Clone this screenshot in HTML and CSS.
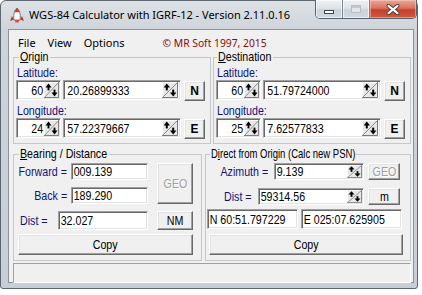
FILE: index.html
```html
<!DOCTYPE html>
<html>
<head>
<meta charset="utf-8">
<title>WGS-84 Calculator</title>
<link rel="stylesheet" href="styles.css">
</head>
<body>
<div class="window">
  <div class="titlebar">
    <svg class="appicon" viewBox="0 0 16 16" width="16" height="16">
      <path d="M3 9 L1 14 L5 12.5Z M13 9 L15 14 L11 12.5Z" fill="#c8352b"/>
      <path d="M8 1 C10.2 3 11.2 5.5 11.2 8.5 L11.2 13 L4.8 13 L4.8 8.5 C4.8 5.5 5.8 3 8 1Z" fill="#fff" stroke="#6a6a6a" stroke-width="0.9"/>
      <path d="M8 1.3 C9.4 2.6 10.2 3.8 10.6 5.2 L5.4 5.2 C5.8 3.8 6.6 2.6 8 1.3Z" fill="#d9352a"/>
      <rect x="6.2" y="13" width="3.6" height="2.4" fill="#e0463a"/>
    </svg>
    <span class="title">WGS-84 Calculator with IGRF-12 - Version 2.11.0.16</span>
    <div class="caption">
      <div class="cbtn cmin"><span class="gmin"></span></div>
      <div class="cbtn cmax"><span class="gmax"></span></div>
      <div class="cbtn cclose">
        <svg viewBox="0 0 14 11" width="14" height="11">
          <path d="M2.5 1.8 L11.5 9.2 M11.5 1.8 L2.5 9.2" stroke="#4a2a24" stroke-width="3.8" stroke-linecap="round"/>
          <path d="M2.5 1.8 L11.5 9.2 M11.5 1.8 L2.5 9.2" stroke="#fff" stroke-width="2.2" stroke-linecap="round"/>
        </svg>
      </div>
    </div>
  </div>

  <div class="client">
    <div class="menubar">
      <span class="menu">File</span>
      <span class="menu">View</span>
      <span class="menu">Options</span>
      <span class="copyright">© MR Soft 1997, 2015</span>
    </div>

    <div class="toprow">
      <fieldset class="group coord">
        <legend class="lg-origin"><span class="n"><u>O</u>rigin</span></legend>
        <div class="lbl"><span class="n">Latitude:</span></div>
        <div class="crow">
          <div class="box deg"><span class="val">60</span><svg class="spin" viewBox="0 0 16 16" preserveAspectRatio="none"><rect width="16" height="16" fill="#e8e8e8"/><path d="M0.5 16V0.5H16" fill="none" stroke="#fff"/><path d="M15.5 0V15.5H0" fill="none" stroke="#7a7a7a"/><path d="M1 15 L15 1" stroke="#8a8a8a"/><path d="M1.6 5.4 L4.8 1.4 L8 5.4Z" fill="#000"/><rect x="3.8" y="5" width="2" height="3.4" fill="#000"/><path d="M8 10.6 L11.2 14.6 L14.4 10.6Z" fill="#000"/><rect x="10.2" y="7.6" width="2" height="3.4" fill="#000"/></svg></div>
          <div class="box mins"><span class="val">20.26899333</span><svg class="spin" viewBox="0 0 16 16" preserveAspectRatio="none"><rect width="16" height="16" fill="#e8e8e8"/><path d="M0.5 16V0.5H16" fill="none" stroke="#fff"/><path d="M15.5 0V15.5H0" fill="none" stroke="#7a7a7a"/><path d="M1 15 L15 1" stroke="#8a8a8a"/><path d="M1.6 5.4 L4.8 1.4 L8 5.4Z" fill="#000"/><rect x="3.8" y="5" width="2" height="3.4" fill="#000"/><path d="M8 10.6 L11.2 14.6 L14.4 10.6Z" fill="#000"/><rect x="10.2" y="7.6" width="2" height="3.4" fill="#000"/></svg></div>
          <div class="btn hemi">N</div>
        </div>
        <div class="lbl lbl2"><span class="n">Longitude:</span></div>
        <div class="crow">
          <div class="box deg"><span class="val">24</span><svg class="spin" viewBox="0 0 16 16" preserveAspectRatio="none"><rect width="16" height="16" fill="#e8e8e8"/><path d="M0.5 16V0.5H16" fill="none" stroke="#fff"/><path d="M15.5 0V15.5H0" fill="none" stroke="#7a7a7a"/><path d="M1 15 L15 1" stroke="#8a8a8a"/><path d="M1.6 5.4 L4.8 1.4 L8 5.4Z" fill="#000"/><rect x="3.8" y="5" width="2" height="3.4" fill="#000"/><path d="M8 10.6 L11.2 14.6 L14.4 10.6Z" fill="#000"/><rect x="10.2" y="7.6" width="2" height="3.4" fill="#000"/></svg></div>
          <div class="box mins"><span class="val">57.22379667</span><svg class="spin" viewBox="0 0 16 16" preserveAspectRatio="none"><rect width="16" height="16" fill="#e8e8e8"/><path d="M0.5 16V0.5H16" fill="none" stroke="#fff"/><path d="M15.5 0V15.5H0" fill="none" stroke="#7a7a7a"/><path d="M1 15 L15 1" stroke="#8a8a8a"/><path d="M1.6 5.4 L4.8 1.4 L8 5.4Z" fill="#000"/><rect x="3.8" y="5" width="2" height="3.4" fill="#000"/><path d="M8 10.6 L11.2 14.6 L14.4 10.6Z" fill="#000"/><rect x="10.2" y="7.6" width="2" height="3.4" fill="#000"/></svg></div>
          <div class="btn hemi">E</div>
        </div>
      </fieldset>

      <fieldset class="group coord dest">
        <legend class="lg-dest"><span class="n"><u>D</u>estination</span></legend>
        <div class="lbl"><span class="n">Latitude:</span></div>
        <div class="crow">
          <div class="box deg"><span class="val">60</span><svg class="spin" viewBox="0 0 16 16" preserveAspectRatio="none"><rect width="16" height="16" fill="#e8e8e8"/><path d="M0.5 16V0.5H16" fill="none" stroke="#fff"/><path d="M15.5 0V15.5H0" fill="none" stroke="#7a7a7a"/><path d="M1 15 L15 1" stroke="#8a8a8a"/><path d="M1.6 5.4 L4.8 1.4 L8 5.4Z" fill="#000"/><rect x="3.8" y="5" width="2" height="3.4" fill="#000"/><path d="M8 10.6 L11.2 14.6 L14.4 10.6Z" fill="#000"/><rect x="10.2" y="7.6" width="2" height="3.4" fill="#000"/></svg></div>
          <div class="box mins"><span class="val">51.79724000</span><svg class="spin" viewBox="0 0 16 16" preserveAspectRatio="none"><rect width="16" height="16" fill="#e8e8e8"/><path d="M0.5 16V0.5H16" fill="none" stroke="#fff"/><path d="M15.5 0V15.5H0" fill="none" stroke="#7a7a7a"/><path d="M1 15 L15 1" stroke="#8a8a8a"/><path d="M1.6 5.4 L4.8 1.4 L8 5.4Z" fill="#000"/><rect x="3.8" y="5" width="2" height="3.4" fill="#000"/><path d="M8 10.6 L11.2 14.6 L14.4 10.6Z" fill="#000"/><rect x="10.2" y="7.6" width="2" height="3.4" fill="#000"/></svg></div>
          <div class="btn hemi">N</div>
        </div>
        <div class="lbl lbl2"><span class="n">Longitude:</span></div>
        <div class="crow">
          <div class="box deg"><span class="val">25</span><svg class="spin" viewBox="0 0 16 16" preserveAspectRatio="none"><rect width="16" height="16" fill="#e8e8e8"/><path d="M0.5 16V0.5H16" fill="none" stroke="#fff"/><path d="M15.5 0V15.5H0" fill="none" stroke="#7a7a7a"/><path d="M1 15 L15 1" stroke="#8a8a8a"/><path d="M1.6 5.4 L4.8 1.4 L8 5.4Z" fill="#000"/><rect x="3.8" y="5" width="2" height="3.4" fill="#000"/><path d="M8 10.6 L11.2 14.6 L14.4 10.6Z" fill="#000"/><rect x="10.2" y="7.6" width="2" height="3.4" fill="#000"/></svg></div>
          <div class="box mins"><span class="val">7.62577833</span><svg class="spin" viewBox="0 0 16 16" preserveAspectRatio="none"><rect width="16" height="16" fill="#e8e8e8"/><path d="M0.5 16V0.5H16" fill="none" stroke="#fff"/><path d="M15.5 0V15.5H0" fill="none" stroke="#7a7a7a"/><path d="M1 15 L15 1" stroke="#8a8a8a"/><path d="M1.6 5.4 L4.8 1.4 L8 5.4Z" fill="#000"/><rect x="3.8" y="5" width="2" height="3.4" fill="#000"/><path d="M8 10.6 L11.2 14.6 L14.4 10.6Z" fill="#000"/><rect x="10.2" y="7.6" width="2" height="3.4" fill="#000"/></svg></div>
          <div class="btn hemi">E</div>
        </div>
      </fieldset>
    </div>

    <div class="botrow">
      <fieldset class="group bearing">
        <legend class="lg-bearing"><span class="n"><u>B</u>earing / Distance</span></legend>
        <div class="fbrow">
          <div class="fbcol">
            <div class="frow"><span class="flbl"><span class="n">Forward =</span></span><div class="box fin"><span class="val">009.139</span></div></div>
            <div class="frow frow2"><span class="flbl"><span class="n">Back =</span></span><div class="box fin"><span class="val">189.290</span></div></div>
          </div>
          <div class="btn geo dis"><span class="n">GEO</span></div>
        </div>
        <div class="distrow">
          <span class="dlbl"><span class="n">Dist =</span></span>
          <div class="box din"><span class="val">32.027</span></div>
          <div class="btn nm"><span class="n">NM</span></div>
        </div>
        <div class="btn copy lcopy"><span class="n">Copy</span></div>
      </fieldset>

      <fieldset class="group direct">
        <legend class="lg-direct"><span class="n">D<u>i</u>rect from Origin (Calc new PSN)</span></legend>
        <div class="drow">
          <span class="rlbl"><span class="n">Azimuth =</span></span>
          <div class="box azin"><span class="val">9.139</span><svg class="spin sspin" viewBox="0 0 16 16" preserveAspectRatio="none"><rect width="16" height="16" fill="#e8e8e8"/><path d="M0.5 16V0.5H16" fill="none" stroke="#fff"/><path d="M15.5 0V15.5H0" fill="none" stroke="#7a7a7a"/><path d="M1 15 L15 1" stroke="#8a8a8a"/><path d="M1.6 5.4 L4.8 1.4 L8 5.4Z" fill="#000"/><rect x="3.8" y="5" width="2" height="3.4" fill="#000"/><path d="M8 10.6 L11.2 14.6 L14.4 10.6Z" fill="#000"/><rect x="10.2" y="7.6" width="2" height="3.4" fill="#000"/></svg></div>
          <div class="btn rbtn dis"><span class="n">GEO</span></div>
        </div>
        <div class="drow drow2">
          <span class="rlbl"><span class="n">Dist =</span></span>
          <div class="box rdin"><span class="val">59314.56</span><svg class="spin sspin" viewBox="0 0 16 16" preserveAspectRatio="none"><rect width="16" height="16" fill="#e8e8e8"/><path d="M0.5 16V0.5H16" fill="none" stroke="#fff"/><path d="M15.5 0V15.5H0" fill="none" stroke="#7a7a7a"/><path d="M1 15 L15 1" stroke="#8a8a8a"/><path d="M1.6 5.4 L4.8 1.4 L8 5.4Z" fill="#000"/><rect x="3.8" y="5" width="2" height="3.4" fill="#000"/><path d="M8 10.6 L11.2 14.6 L14.4 10.6Z" fill="#000"/><rect x="10.2" y="7.6" width="2" height="3.4" fill="#000"/></svg></div>
          <div class="btn rbtn"><span class="n">m</span></div>
        </div>
        <div class="posrow">
          <div class="box nbox"><span class="val">N 60:51.797229</span></div>
          <div class="box ebox"><span class="val">E 025:07.625905</span></div>
        </div>
        <div class="btn copy rcopy"><span class="n">Copy</span></div>
      </fieldset>
    </div>

    <div class="status"></div>
  </div>
</div>
</body>
</html>
```

FILE: styles.css
```css
* { box-sizing: border-box; }
html, body { margin: 0; padding: 0; background: #ffffff; }
body {
  width: 422px; height: 295px; overflow: hidden;
  font-family: "Liberation Sans", Arial, sans-serif;
  font-size: 13px; color: #000;
}
/* narrow control font: Arial-metric text compressed horizontally */
.n, .val { display: inline-block; white-space: nowrap; transform: scaleX(0.82); transform-origin: 0 50%; }

.window {
  width: 418px; height: 289px;
  border: 1px solid #5d666f;
  border-radius: 6px 6px 3px 3px;
  background: linear-gradient(#dde2e7, #cdd3d9 30px, #c8ced5);
  display: flex; flex-direction: column;
}
.titlebar { height: 28px; flex: none; display: flex; align-items: flex-start; padding-left: 8px; }
.appicon { width: 16px; height: 16px; margin-top: 6px; flex: none; }
.title {
  font-family: "Noto Sans", "Open Sans", sans-serif; font-size: 11px; line-height: 16px;
  margin-top: 6px; margin-left: 4px; color: #000; white-space: nowrap;
}
.caption {
  margin-left: auto; margin-top: -1px; display: flex; height: 19px;
  border: 1px solid #59636d; border-top: none; border-radius: 0 0 5px 5px; overflow: hidden; flex: none;
}
.cbtn { height: 18px; display: flex; align-items: center; justify-content: center; }
.cmin, .cmax {
  width: 27px; border-right: 1px solid #7d8791;
  background: linear-gradient(#eef1f4, #dfe4e9 45%, #cbd2d9 55%, #d3d9df);
  box-shadow: inset 0 0 0 1px rgba(255,255,255,.6);
}
.cclose {
  width: 46px;
  background: linear-gradient(#e9a898, #d9735f 45%, #c6402e 55%, #cf5a42);
  box-shadow: inset 0 0 0 1px rgba(255,220,210,.45);
}
.gmin { width: 10px; height: 4px; background: #fff; border: 1px solid #3c4650; margin-top: 6px; }
.gmax { width: 10px; height: 8px; border: 1px solid #b5bcc3; box-shadow: inset 0 2px 0 #c2c9d0; background: #e2e6ea; }

.client {
  margin: 0 3px 0 7px; height: 254px; flex: none;
  background: #f0f0f0; border: 1px solid #8c939a;
  display: flex; flex-direction: column;
  padding: 0 2px 0 4px;
}
.menubar {
  height: 21px; flex: none; padding: 6px 0 0 5px;
  font-family: "Noto Sans", "Open Sans", sans-serif; font-size: 11px; line-height: 14px;
  display: flex; align-items: baseline; white-space: nowrap;
}
.menu { margin-right: 12px; }
.copyright { margin-left: 26px; color: #8b0a0a; font-size: 10.3px; }

.toprow { display: flex; gap: 2px; flex: none; }
.botrow { display: flex; gap: 3px; margin-top: 4px; flex: none; }

fieldset.group {
  margin: 0; min-width: 0;
  border: 1px solid #c3c8cc;
  padding: 3px 0 5px 0;
}
legend { font-size: 13px; line-height: 12px; padding: 0 1px; margin-left: 5px; white-space: nowrap; }
.lg-origin { width: 31px; }
.lg-dest { width: 56px; margin-left: 3px; }
.lg-bearing { width: 90px; }
.lg-direct { width: 146px; margin-left: 4px; }
.lg-direct .n { transform: scaleX(0.73); }

.coord { width: 198px; }
.bearing { width: 189px; }
.direct { width: 206px; }

.lbl { color: #10107e; line-height: 13px; height: 13px; padding-left: 3px; white-space: nowrap; }
.lbl2 { margin-top: 4px; }
.crow { display: flex; align-items: flex-start; height: 20px; margin-top: 1px; padding-left: 2px; }

.box {
  background: #fff; display: flex; align-items: center;
  border-top: 1px solid #a0a0a0; border-left: 1px solid #a0a0a0;
  border-bottom: 1px solid #fff; border-right: 1px solid #fff;
  box-shadow: inset 1px 1px 0 #696969, inset -1px -1px 0 #e3e3e3;
  line-height: 15px; white-space: nowrap; overflow: hidden;
}
.box .val { flex: 1; min-width: 0; }
.spin { flex: none; display: block; }
.deg { width: 45px; height: 20px; }
.deg .val { text-align: right; padding-right: 1px; transform-origin: 100% 50%; }
.deg .spin { width: 15px; height: 16px; margin-right: 1px; }
.mins { width: 118px; height: 20px; margin-left: 2px; }
.mins .val { padding-left: 4px; }
.mins .spin { width: 16px; height: 16px; margin-right: 2px; }

.btn {
  background: #f0f0f0; display: flex; align-items: center; justify-content: center;
  border-top: 1px solid #fff; border-left: 1px solid #fff;
  border-bottom: 1px solid #696969; border-right: 1px solid #696969;
  box-shadow: inset -1px -1px 0 #a0a0a0, inset 1px 1px 0 #e3e3e3;
  line-height: 15px; white-space: nowrap;
}
.btn .n { transform-origin: 50% 50%; }
.dis { color: #a0a0a0; text-shadow: 1px 1px 0 #fff; }
.hemi {
  width: 21px; height: 20px; margin-left: 3px; margin-top: 1px;
  font-weight: bold; font-size: 12px;
}

/* Bearing / Distance */
.fbrow { display: flex; align-items: flex-start; }
.frow { display: flex; align-items: center; }
.frow2 { margin-top: 7px; }
.flbl { width: 57px; display: flex; justify-content: flex-end; padding-right: 4px; color: #10107e; white-space: nowrap; }
.flbl .n { transform-origin: 100% 50%; flex: none; }
.fin { width: 77px; height: 17px; }
.fin .val { padding-left: 2px; }
.geo { width: 36px; height: 41px; margin-left: 9px; }
.distrow { display: flex; align-items: center; margin-top: 7px; }
.dlbl { width: 44px; padding-left: 6px; color: #10107e; white-space: nowrap; }
.din { width: 90px; height: 19px; }
.din .val { padding-left: 2px; }
.nm { width: 36px; height: 19px; margin-left: 9px; }
.copy { height: 21px; margin-top: 4px; }
.lcopy { width: 175px; margin-left: 4px; }

/* Direct from origin */
.drow { display: flex; align-items: center; justify-content: flex-end; padding-right: 10px; }
.drow2 { margin-top: 8px; }
.rlbl { color: #10107e; margin-right: 6px; white-space: nowrap; }
.rlbl .n { transform-origin: 100% 50%; }
.azin { width: 90px; height: 17px; }
.rdin { width: 106px; height: 17px; }
.azin .val, .rdin .val { padding-left: 2px; }
.sspin { width: 15px; height: 13px; margin-right: 1px; }
.rbtn { width: 32px; height: 17px; margin-left: 4px; }
.posrow { display: flex; gap: 3px; margin-top: 4px; padding-left: 1px; }
.nbox { width: 91px; height: 20px; }
.ebox { width: 101px; height: 20px; }
.nbox .val, .ebox .val { padding-left: 2px; }
.rcopy { width: 194px; margin-left: 3px; margin-top: 5px; }

.status {
  margin-top: 2px; height: 20px; flex: none;
  border-top: 1px solid #a0a0a0; border-left: 1px solid #a0a0a0;
  border-bottom: 1px solid #fff; border-right: 1px solid #fff;
}
```
